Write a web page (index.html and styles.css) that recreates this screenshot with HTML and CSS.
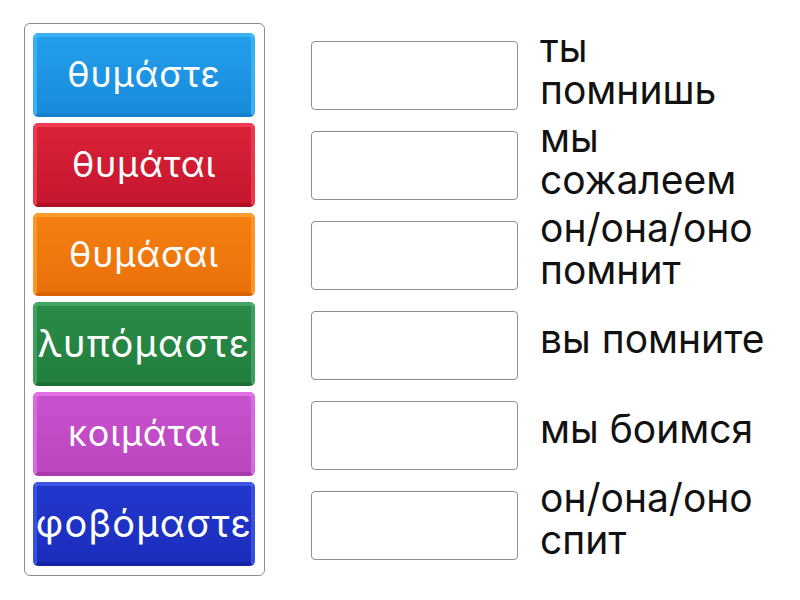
FILE: index.html
```html
<!DOCTYPE html>
<html lang="ru">
<head>
<meta charset="utf-8">
<title>Match up</title>
<link rel="stylesheet" href="styles.css">
</head>
<body>
<div class="game">
  <div class="bank">
    <div class="tile tile-blue">θυμάστε</div>
    <div class="tile tile-red">θυμάται</div>
    <div class="tile tile-orange">θυμάσαι</div>
    <div class="tile tile-green tile-wide">λυπόμαστε</div>
    <div class="tile tile-purple">κοιμάται</div>
    <div class="tile tile-navy tile-wide">φοβόμαστε</div>
  </div>
  <div class="targets">
    <div class="row"><div class="slot"></div><div class="label">ты помнишь</div></div>
    <div class="row"><div class="slot"></div><div class="label">мы сожалеем</div></div>
    <div class="row"><div class="slot"></div><div class="label">он/она/оно помнит</div></div>
    <div class="row"><div class="slot"></div><div class="label">вы помните</div></div>
    <div class="row"><div class="slot"></div><div class="label">мы боимся</div></div>
    <div class="row"><div class="slot"></div><div class="label">он/она/оно спит</div></div>
  </div>
</div>
</body>
</html>
```
FILE: styles.css
```css
html, body {
  margin: 0;
  padding: 0;
  background: #ffffff;
}

.game {
  display: flex;
  align-items: flex-start;
  padding: 23px 0 0 24px;
}

.bank {
  box-sizing: border-box;
  width: 241px;
  height: 553px;
  border: 1px solid #8c8c8c;
  border-radius: 6px;
  padding: 9px 8px;
  display: flex;
  flex-direction: column;
  gap: 6px;
}

.tile {
  box-sizing: border-box;
  width: 222px;
  height: 84px;
  border-radius: 5px;
  border: 4px solid;
  display: flex;
  align-items: center;
  justify-content: center;
  color: #ffffff;
  font-family: Inter, "Liberation Sans", sans-serif;
  font-size: 36px;
  letter-spacing: 0.8px;
  white-space: nowrap;
  padding-bottom: 2px;
}

.tile-wide {
  font-size: 38px;
  letter-spacing: 1.2px;
}

.tile-blue {
  background: linear-gradient(#229eec, #1a8bdb);
  border-color: #3cb2f6 #3aaff4 #147fcc #3aaff4;
}
.tile-red {
  background: linear-gradient(#d92238, #c5162d);
  border-color: #ef3c52 #ea384d #b20f25 #ea384d;
}
.tile-orange {
  background: linear-gradient(#f57f10, #ea710a);
  border-color: #fd9b2d #fb952a #d86406 #fb952a;
}
.tile-green {
  background: linear-gradient(#298a46, #22803e);
  border-color: #44a562 #3f9f5c #1b7135 #3f9f5c;
}
.tile-purple {
  background: linear-gradient(#c852cd, #bb46c0);
  border-color: #de70e2 #d96ade #a93aae #d96ade;
}
.tile-navy {
  background: linear-gradient(#2137cc, #1b2dbd);
  border-color: #3d55e4 #3850e0 #1424a6 #3850e0;
}

.targets {
  margin-left: 46px;
  margin-top: 10px;
  display: grid;
  grid-auto-rows: 84px;
  row-gap: 6px;
}

.row {
  display: flex;
  align-items: center;
}

.slot {
  box-sizing: border-box;
  width: 207px;
  height: 69px;
  border: 1px solid #8e8e8e;
  border-radius: 4px;
  background: #ffffff;
  flex: none;
}

.label {
  margin-left: 22px;
  width: 228px;
  font-family: Inter, "Liberation Sans", sans-serif;
  font-size: 39px;
  line-height: 42px;
  color: #111111;
  padding-bottom: 13px;
}
```
